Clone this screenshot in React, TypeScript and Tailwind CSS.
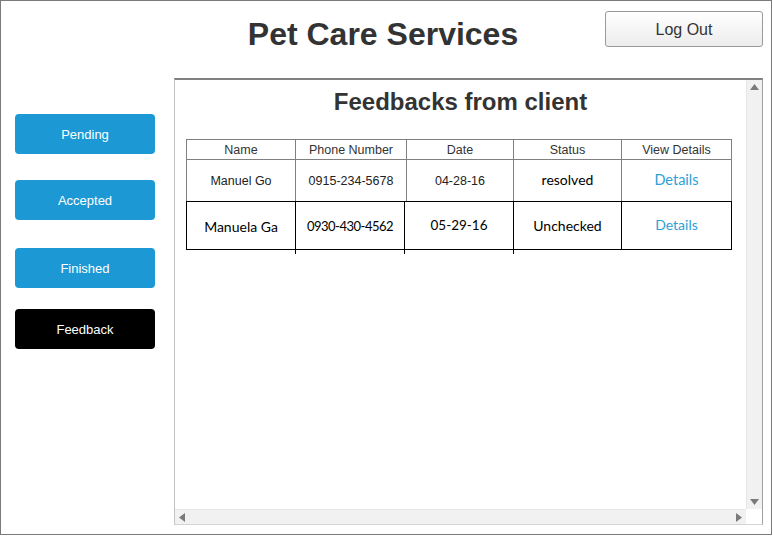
import React from "react";

const arial = { fontFamily: '"Liberation Sans", Arial, sans-serif' };
const cal = { fontFamily: 'Lato, "Noto Sans", sans-serif' };

function SideButton({ label, dark, className }: { label: string; dark?: boolean; className?: string }) {
  return (
    <div
      className={`w-[140px] h-[40px] rounded-[4px] flex items-center justify-center pt-[1px] text-[13px] text-white ${
        dark ? "bg-black" : "bg-[#1c99d5]"
      } ${className ?? ""}`}
    >
      {label}
    </div>
  );
}

export default function App() {
  return (
    <div className="w-[773px] h-[536px] bg-white" style={arial}>
      <div className="w-[772px] h-[535px] border border-[#7a7a7a] flex flex-col">
        {/* Header */}
        <div className="h-[77px] flex items-start shrink-0">
          <div className="w-[604px] pl-[160px] text-center pt-[13px]">
            <span className="text-[32px] font-bold text-[#333] leading-[40px]">Pet Care Services</span>
          </div>
          <button className="mt-[10px] w-[158px] h-[36px] rounded-[3px] border border-[#9a9a9a] bg-gradient-to-b from-white to-[#ececec] text-[16px] text-[#333] flex items-center justify-center pt-[1px]">
            Log Out
          </button>
        </div>
        {/* Body */}
        <div className="flex flex-1">
          <div className="w-[173px] shrink-0 pl-[14px] pt-[36px] flex flex-col">
            <SideButton label="Pending" />
            <SideButton label="Accepted" className="mt-[26px]" />
            <SideButton label="Finished" className="mt-[28px]" />
            <SideButton label="Feedback" dark className="mt-[21px]" />
          </div>
          <div className="w-[589px] h-[447px] border-t-2 border-t-[#808080] border-l border-l-[#c4c4c4] border-r border-r-[#a0a0a0] border-b border-b-[#d4d4d4] flex flex-col">
            <div className="flex flex-1 min-h-0">
              <div className="flex-1 flex flex-col">
                <div className="text-center pt-[8px] h-[59px]">
                  <span className="text-[24px] font-bold text-[#333] leading-[28px]">Feedbacks from client</span>
                </div>
                <div className="pl-[11px]">
                  <div className="w-[546px]">
                    {/* header + row1 */}
                    <div className="border-l border-r border-t border-[#808080]">
                      <div className="grid grid-cols-[109px_111px_107px_108px_109px] h-[20px] border-b border-[#808080] text-[12.5px] text-[#333]">
                        {["Name", "Phone Number", "Date", "Status", "View Details"].map((h, i) => (
                          <div
                            key={h}
                            className={`flex items-center justify-center leading-none pt-[1px] ${i < 4 ? "border-r border-[#808080]" : ""}`}
                          >
                            {h}
                          </div>
                        ))}
                      </div>
                      <div className="grid grid-cols-[109px_111px_107px_108px_109px] h-[41px] text-[#222]">
                        <div className="border-r border-[#808080] flex items-center justify-center text-[12.5px] pt-[2px]">Manuel Go</div>
                        <div className="border-r border-[#808080] flex items-center justify-center text-[12.5px] pt-[2px]">0915-234-5678</div>
                        <div className="border-r border-[#808080] flex items-center justify-center text-[12.5px] pt-[2px]">04-28-16</div>
                        <div className="border-r border-[#808080] flex items-center justify-center text-[14px] text-black pb-[2px]" style={cal}>resolved</div>
                        <div className="flex items-center justify-center text-[14.5px] text-[#2d9fd8] pb-[2px]" style={cal}>Details</div>
                      </div>
                    </div>
                    {/* row2 */}
                    <div className="border border-black grid grid-cols-[109px_109px_109px_108px_109px] h-[49px] text-black" style={cal}>
                      <div className="border-r border-black flex items-center justify-center text-[14px] pt-[2px]">Manuela Ga</div>
                      <div className="border-r border-black flex items-center justify-center text-[13px] tracking-[-0.5px] pt-[2px]">0930-430-4562</div>
                      <div className="border-r border-black flex items-center justify-center text-[13.5px]">05-29-16</div>
                      <div className="border-r border-black flex items-center justify-center text-[14px]">Unchecked</div>
                      <div className="flex items-center justify-center text-[14px] text-[#2d9fd8] pb-[2px]">Details</div>
                    </div>
                    <div className="grid grid-cols-[110px_109px_109px] h-[4px]">
                      <div className="border-r border-black" />
                      <div className="border-r border-black" />
                      <div className="border-r border-black" />
                    </div>
                  </div>
                </div>
              </div>
              {/* vertical scrollbar */}
              <div className="w-[16px] bg-[#f1f1f1] border-l border-[#e6e6e6] flex flex-col items-center justify-between py-[4px]">
                <svg width="9" height="6" viewBox="0 0 9 6"><path d="M4.5 0L9 6H0Z" fill="#7a7a7a" /></svg>
                <svg width="9" height="6" viewBox="0 0 9 6"><path d="M0 0H9L4.5 6Z" fill="#7a7a7a" /></svg>
              </div>
            </div>
            {/* horizontal scrollbar */}
            <div className="h-[15px] flex shrink-0">
              <div className="flex-1 bg-[#f1f1f1] border-t border-[#e6e6e6] flex items-center justify-between px-[4px]">
                <svg width="6" height="9" viewBox="0 0 6 9"><path d="M6 0V9L0 4.5Z" fill="#7a7a7a" /></svg>
                <svg width="6" height="9" viewBox="0 0 6 9"><path d="M0 0L6 4.5L0 9Z" fill="#7a7a7a" /></svg>
              </div>
              <div className="w-[16px] bg-white" />
            </div>
          </div>
        </div>
      </div>
    </div>
  );
}
